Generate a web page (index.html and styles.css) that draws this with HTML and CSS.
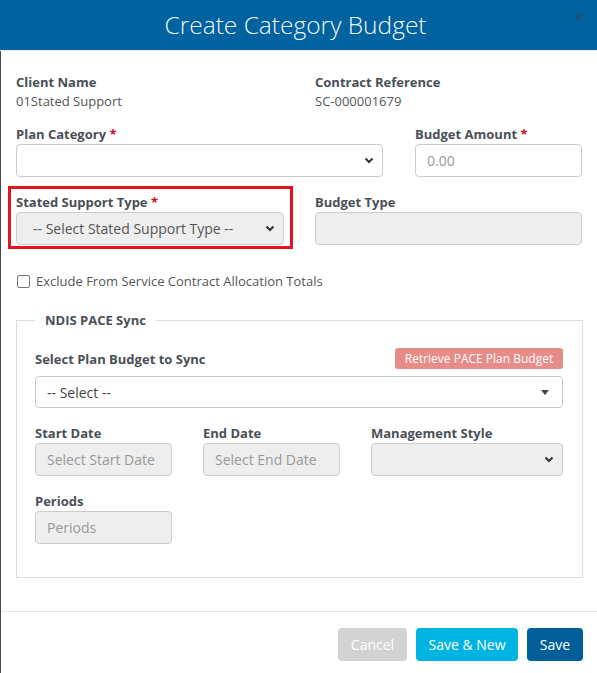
FILE: index.html
```html
<!DOCTYPE html>
<html lang="en">
<head>
<meta charset="utf-8">
<title>Create Category Budget</title>
<link rel="stylesheet" href="styles.css">
</head>
<body>
<div class="modal">
  <header class="modal-header">
    <h1 class="modal-title">Create Category Budget</h1>
    <span class="close">&times;</span>
  </header>
  <div class="modal-main">
    <div class="modal-body">
      <div class="row row-info">
        <div class="field">
          <div class="label">Client Name</div>
          <div class="value">01Stated Support</div>
        </div>
        <div class="field">
          <div class="label">Contract Reference</div>
          <div class="value">SC-000001679</div>
        </div>
      </div>

      <div class="row row-plan">
        <div class="field">
          <div class="label">Plan Category <span class="req">*</span></div>
          <div class="control select">
            <span class="text"></span>
            <svg class="chev" width="10" height="7" viewBox="0 0 10 7"><path d="M1.5 1.5 L5 5 L8.5 1.5" fill="none" stroke="#333" stroke-width="2"/></svg>
          </div>
        </div>
        <div class="field">
          <div class="label">Budget Amount <span class="req">*</span></div>
          <div class="control"><span class="placeholder">0.00</span></div>
        </div>
      </div>

      <div class="row row-type">
        <div class="highlight">
          <div class="label">Stated Support Type <span class="req">*</span></div>
          <div class="control select disabled type-select">
            <span class="text">-- Select Stated Support Type --</span>
            <svg class="chev" width="10" height="7" viewBox="0 0 10 7"><path d="M1.5 1.5 L5 5 L8.5 1.5" fill="none" stroke="#333" stroke-width="2"/></svg>
          </div>
        </div>
        <div class="field field-budget-type">
          <div class="label">Budget Type</div>
          <div class="control disabled"></div>
        </div>
      </div>

      <label class="check">
        <span class="box"></span>
        <span>Exclude From Service Contract Allocation Totals</span>
      </label>

      <fieldset class="sync">
        <legend>NDIS PACE Sync</legend>
        <div class="sync-head">
          <div class="label">Select Plan Budget to Sync</div>
          <button class="btn-retrieve" type="button">Retrieve PACE Plan Budget</button>
        </div>
        <div class="control select2">
          <span class="text">-- Select --</span>
          <span class="caret"></span>
        </div>

        <div class="row row-dates">
          <div class="field">
            <div class="label">Start Date</div>
            <div class="control disabled"><span class="placeholder">Select Start Date</span></div>
          </div>
          <div class="field">
            <div class="label">End Date</div>
            <div class="control disabled"><span class="placeholder">Select End Date</span></div>
          </div>
          <div class="field">
            <div class="label">Management Style</div>
            <div class="control select disabled">
              <span class="text"></span>
              <svg class="chev" width="10" height="7" viewBox="0 0 10 7"><path d="M1.5 1.5 L5 5 L8.5 1.5" fill="none" stroke="#333" stroke-width="2"/></svg>
            </div>
          </div>
        </div>

        <div class="row row-periods">
          <div class="field">
            <div class="label">Periods</div>
            <div class="control disabled"><span class="placeholder">Periods</span></div>
          </div>
        </div>
      </fieldset>
    </div>

    <footer class="modal-footer">
      <button class="btn btn-cancel" type="button">Cancel</button>
      <button class="btn btn-savenew" type="button">Save &amp; New</button>
      <button class="btn btn-save" type="button">Save</button>
    </footer>
  </div>
</div>
</body>
</html>
```

FILE: styles.css
```css
* { box-sizing: border-box; }

html, body {
  margin: 0;
  padding: 0;
  background: #ffffff;
}

body {
  font-family: "Open Sans", "Noto Sans", "Liberation Sans", sans-serif;
  font-size: 13px;
  color: #555;
  width: 597px;
  height: 673px;
  overflow: hidden;
}

.modal {
  width: 597px;
}

.modal-header {
  position: relative;
  height: 51px;
  background: #00629f;
  border-bottom: 1px solid #e3ecf3;
  display: flex;
  align-items: center;
  justify-content: center;
}

.modal-title {
  margin: 0;
  font-size: 24.5px;
  font-weight: 300;
  color: #f2f6fa;
  line-height: 30px;
  padding-right: 6px;
}

.close {
  position: absolute;
  right: 13px;
  top: 6px;
  font-size: 18px;
  font-weight: 700;
  color: #1b4f7c;
  line-height: 20px;
}

.modal-main {
  border-left: 1px solid #4a4a4a;
}

.modal-body {
  padding: 22px 14px 33px 15px;
}

.row {
  display: grid;
}

.label {
  font-weight: 700;
  font-size: 13px;
  line-height: 18px;
  color: #4a4f57;
  margin-bottom: 1px;
  white-space: nowrap;
}

.req {
  color: #c8102e;
}

.value {
  line-height: 18px;
  color: #555;
}

.row-info {
  grid-template-columns: 299px 1fr;
}

.row-plan {
  margin-top: 15px;
  grid-template-columns: 367px 167px;
  column-gap: 32px;
}

.control {
  height: 33px;
  border: 1px solid #cccccc;
  border-radius: 4px;
  background: #fff;
  display: flex;
  align-items: center;
  padding: 0 11px;
  font-size: 14px;
  color: #555;
}

.control.disabled {
  background: #eeeeee;
}

.placeholder {
  color: #999;
}

.select {
  justify-content: space-between;
  padding-right: 8px;
}

.select .text {
  color: #555;
}

.chev {
  display: block;
}

.row-type {
  margin-top: 9px;
  margin-left: -8px;
  grid-template-columns: 285px 267px;
  column-gap: 22px;
  align-items: start;
}

.highlight {
  border: 3px solid #e3141e;
  padding: 4px 6px 1px 5px;
}

.type-select {
  padding-left: 16px;
}

.field-budget-type {
  padding-top: 7px;
}

.check {
  margin-top: 23px;
  display: flex;
  align-items: center;
  gap: 6px;
  line-height: 18px;
  color: #555;
  font-size: 13px;
}

.check .box {
  width: 13px;
  height: 13px;
  border: 1px solid #767676;
  border-radius: 2px;
  background: #fff;
  margin-left: 1px;
}

.sync {
  margin: 21px 0 0 0;
  border: 1px solid #dddddd;
  padding: 0 19px 33px 18px;
  min-width: 0;
}

.sync legend {
  padding: 0 10px;
  font-weight: 700;
  font-size: 13px;
  line-height: 18px;
  color: #4a4f57;
}

.sync-head {
  margin-top: 19px;
  height: 21px;
  display: flex;
  justify-content: space-between;
  align-items: center;
}

.sync-head .label {
  margin-bottom: 0;
}

.btn-retrieve {
  height: 21px;
  width: 168px;
  border: 0;
  border-radius: 3px;
  background: #e88c89;
  color: #fff;
  font-family: inherit;
  font-size: 12px;
  padding: 0;
}

.select2 {
  margin-top: 7px;
  height: 32px;
  justify-content: space-between;
  padding-right: 13px;
}

.select2 .text {
  color: #444;
}

.caret {
  width: 0;
  height: 0;
  border-left: 4px solid transparent;
  border-right: 4px solid transparent;
  border-top: 5px solid #444;
}

.row-dates {
  margin-top: 16px;
  grid-template-columns: 137px 137px 1fr;
  column-gap: 31px;
}

.row-periods {
  margin-top: 16px;
  grid-template-columns: 137px;
}

.modal-footer {
  border-top: 1px solid #e5e5e5;
  padding: 16px 14px 12px 0;
  display: flex;
  justify-content: flex-end;
  gap: 9px;
}

.btn {
  height: 33px;
  border: 0;
  border-radius: 4px;
  color: #fff;
  font-family: inherit;
  font-size: 14px;
  padding: 0;
}

.btn-cancel {
  width: 69px;
  background: #d3d3d3;
}

.btn-savenew {
  width: 102px;
  background: #00b4e1;
}

.btn-save {
  width: 56px;
  background: #005f98;
}
```
